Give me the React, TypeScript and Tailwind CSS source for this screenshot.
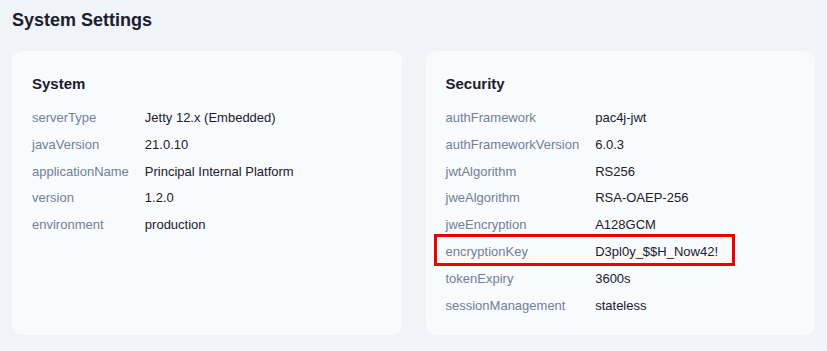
const system: [string, string][] = [
  ["serverType", "Jetty 12.x (Embedded)"],
  ["javaVersion", "21.0.10"],
  ["applicationName", "Principal Internal Platform"],
  ["version", "1.2.0"],
  ["environment", "production"],
];

const security: [string, string][] = [
  ["authFramework", "pac4j-jwt"],
  ["authFrameworkVersion", "6.0.3"],
  ["jwtAlgorithm", "RS256"],
  ["jweAlgorithm", "RSA-OAEP-256"],
  ["jweEncryption", "A128GCM"],
  ["encryptionKey", "D3pl0y_$$H_Now42!"],
  ["tokenExpiry", "3600s"],
  ["sessionManagement", "stateless"],
];

function SettingsCard({
  title,
  rows,
  highlight,
}: {
  title: string;
  rows: [string, string][];
  highlight?: string;
}) {
  return (
    <div className="bg-[#f8fafc] rounded-[10px] px-5 pt-5 pb-4">
      <h2 className="text-[15px] leading-[25px] font-bold text-[#1a202c] mb-[9px]">
        {title}
      </h2>
      <table className="border-collapse text-[13px] leading-[14.8px]">
        <tbody>
          {rows.map(([key, value]) => (
            <tr key={key}>
              <td className="relative py-[6px] pr-4 text-[#718096] whitespace-nowrap">
                {key === highlight && (
                  <span className="absolute left-[-12px] top-[-4.6px] w-[301px] h-[32px] border-[3px] border-[#ee0000] pointer-events-none" />
                )}
                {key}
              </td>
              <td className="py-[6px] text-[#1a202c] whitespace-nowrap">
                {value}
              </td>
            </tr>
          ))}
        </tbody>
      </table>
    </div>
  );
}

export default function App() {
  return (
    <div
      className="min-h-screen bg-[#f0f3f8] px-3 pt-[7px] pb-4"
      style={{ fontFamily: '"Liberation Sans", Arial, sans-serif' }}
    >
      <h1 className="text-[18px] leading-[27px] font-bold text-[#1a202c] mb-[17px]">
        System Settings
      </h1>
      <div className="grid grid-cols-2 gap-6">
        <SettingsCard title="System" rows={system} />
        <SettingsCard title="Security" rows={security} highlight="encryptionKey" />
      </div>
    </div>
  );
}
